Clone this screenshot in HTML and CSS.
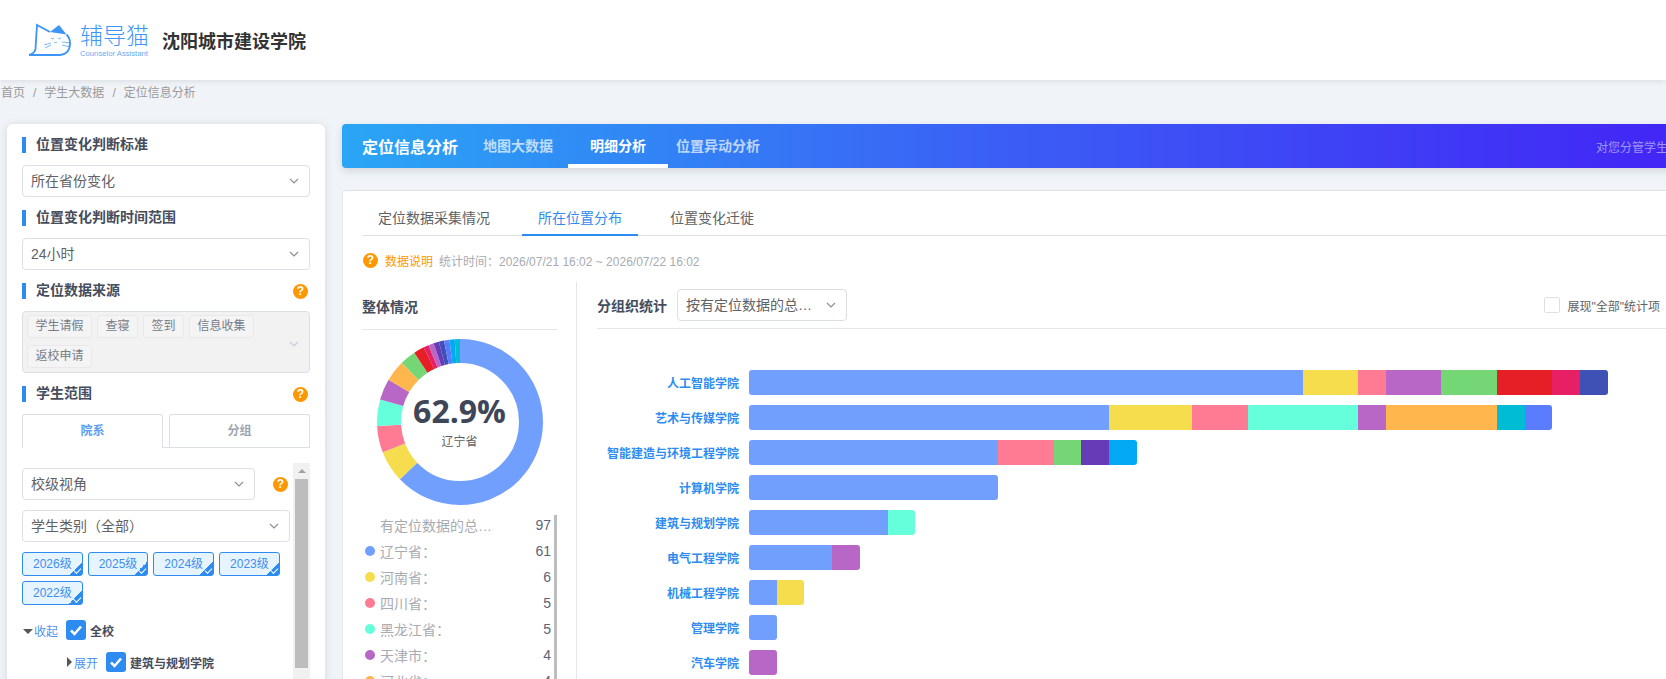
FILE: index.html
```html
<!DOCTYPE html>
<html lang="zh-CN">
<head>
  <meta charset="UTF-8">
  <meta name="viewport" content="width=device-width, initial-scale=1.0">
  <title>定位信息分析</title>
  <link rel="stylesheet" href="styles.css">
</head>
<body>
  <header class="topbar">
    <svg class="logo-cat" viewBox="0 0 42 34" width="42" height="34">
      <path class="cat-ear" d="M30 2 L21 9 L37.500 11.500 Z"/>
      <path class="cat-line" d="M21 9 L8 2 L6.500 26 Q6 29 3.500 30.500 L0 32 L31 32 Q41 31 41 20 Q41 15 37.500 11.500"/>
      <path class="cat-thin" d="M15 22 L22 20 M16 25 L22 22 M33 19 L42 20 M33 22 L41 24"/>
      <path class="cat-thin" d="M22 15 q1.500 1.500 3 0 M29 15 q1.500 1.500 3 0 M25 19 q1.500 1.500 3 0"/>
    </svg>
    <div class="logo-text">
      <div class="logo-name">辅导猫</div>
      <div class="logo-sub">Counselor Assistant</div>
    </div>
    <div class="school">沈阳城市建设学院</div>
  </header>

  <nav class="crumbs">首页<i>/</i>学生大数据<i>/</i>定位信息分析</nav>

  <div class="page">
    <aside class="side">
      <div class="side-title">位置变化判断标准</div>
      <div class="select">
        <span class="select-text">所在省份变化</span>
        <svg class="chev" viewBox="0 0 10 6" width="10" height="6"><path d="M1 1 L5 5 L9 1"/></svg>
      </div>

      <div class="side-title">位置变化判断时间范围</div>
      <div class="select">
        <span class="select-text">24小时</span>
        <svg class="chev" viewBox="0 0 10 6" width="10" height="6"><path d="M1 1 L5 5 L9 1"/></svg>
      </div>

      <div class="side-title">定位数据来源<span class="help">?</span></div>
      <div class="multi">
        <div class="multi-tags">
          <span class="mtag">学生请假</span>
          <span class="mtag">查寝</span>
          <span class="mtag">签到</span>
          <span class="mtag">信息收集</span>
          <span class="mtag">返校申请</span>
        </div>
        <svg class="chev faded" viewBox="0 0 10 6" width="10" height="6"><path d="M1 1 L5 5 L9 1"/></svg>
      </div>

      <div class="side-title">学生范围<span class="help">?</span></div>
      <div class="scope-tabs">
        <div class="scope-tab on">院系</div>
        <div class="scope-tab">分组</div>
      </div>

      <div class="scope">
        <div class="scope-body">
          <div class="view-row">
            <div class="select">
              <span class="select-text">校级视角</span>
              <svg class="chev" viewBox="0 0 10 6" width="10" height="6"><path d="M1 1 L5 5 L9 1"/></svg>
            </div>
            <span class="help">?</span>
          </div>
          <div class="select">
            <span class="select-text">学生类别（全部）</span>
            <svg class="chev" viewBox="0 0 10 6" width="10" height="6"><path d="M1 1 L5 5 L9 1"/></svg>
          </div>
          <div class="years">
            <span class="year">2026级</span>
            <span class="year">2025级</span>
            <span class="year">2024级</span>
            <span class="year">2023级</span>
            <span class="year">2022级</span>
          </div>
          <div class="tree-row">
            <span class="tri-down"></span><a class="tree-link">收起</a>
            <span class="check"><svg viewBox="0 0 20 20" width="20" height="20"><path d="M5 10.500 L8.500 14 L15 6.500"/></svg></span>
            <b class="tree-name">全校</b>
          </div>
          <div class="tree-row sub">
            <span class="tri-right"></span><a class="tree-link">展开</a>
            <span class="check"><svg viewBox="0 0 20 20" width="20" height="20"><path d="M5 10.500 L8.500 14 L15 6.500"/></svg></span>
            <b class="tree-name">建筑与规划学院</b>
          </div>
        </div>
        <div class="scroll-y">
          <span class="scroll-up"></span>
          <div class="scroll-thumb"></div>
        </div>
      </div>
    </aside>

    <main class="main">
      <div class="banner">
        <div class="banner-title">定位信息分析</div>
        <a class="banner-tab">地图大数据</a>
        <a class="banner-tab on">明细分析</a>
        <a class="banner-tab">位置异动分析</a>
        <div class="banner-note">对您分管学生</div>
      </div>

      <section class="card">
        <div class="tabs">
          <a class="tab">定位数据采集情况</a>
          <a class="tab on">所在位置分布</a>
          <a class="tab">位置变化迁徙</a>
        </div>

        <div class="info">
          <span class="help">?</span>
          <span class="info-link">数据说明</span>
          <span class="info-time">统计时间：2026/07/21 16:02 ~ 2026/07/22 16:02</span>
        </div>

        <div class="stats">
          <div class="overall">
            <div class="overall-title">整体情况</div>
            <div class="donut">
              <svg viewBox="0 0 166 166" width="166" height="166">
                <g class="donut-ring" transform="rotate(-90 83 83)">
                  <circle cx="83" cy="83" r="71" pathLength="97" stroke="#709ffe" stroke-dasharray="61 97" stroke-dashoffset="0"/>
                  <circle cx="83" cy="83" r="71" pathLength="97" stroke="#f5dd4d" stroke-dasharray="6 97" stroke-dashoffset="-61"/>
                  <circle cx="83" cy="83" r="71" pathLength="97" stroke="#ff7b93" stroke-dasharray="5 97" stroke-dashoffset="-67"/>
                  <circle cx="83" cy="83" r="71" pathLength="97" stroke="#66ffdb" stroke-dasharray="5 97" stroke-dashoffset="-72"/>
                  <circle cx="83" cy="83" r="71" pathLength="97" stroke="#b867c6" stroke-dasharray="4 97" stroke-dashoffset="-77"/>
                  <circle cx="83" cy="83" r="71" pathLength="97" stroke="#ffb74d" stroke-dasharray="4 97" stroke-dashoffset="-81"/>
                  <circle cx="83" cy="83" r="71" pathLength="97" stroke="#75d676" stroke-dasharray="3 97" stroke-dashoffset="-85"/>
                  <circle cx="83" cy="83" r="71" pathLength="97" stroke="#e61e26" stroke-dasharray="2 97" stroke-dashoffset="-88"/>
                  <circle cx="83" cy="83" r="71" pathLength="97" stroke="#e72065" stroke-dasharray="1 97" stroke-dashoffset="-90"/>
                  <circle cx="83" cy="83" r="71" pathLength="97" stroke="#b867c6" stroke-dasharray="1 97" stroke-dashoffset="-91"/>
                  <circle cx="83" cy="83" r="71" pathLength="97" stroke="#673ab7" stroke-dasharray="1 97" stroke-dashoffset="-92"/>
                  <circle cx="83" cy="83" r="71" pathLength="97" stroke="#3f51b5" stroke-dasharray="1 97" stroke-dashoffset="-93"/>
                  <circle cx="83" cy="83" r="71" pathLength="97" stroke="#5c7cff" stroke-dasharray="1 97" stroke-dashoffset="-94"/>
                  <circle cx="83" cy="83" r="71" pathLength="97" stroke="#03a9f4" stroke-dasharray="1 97" stroke-dashoffset="-95"/>
                  <circle cx="83" cy="83" r="71" pathLength="97" stroke="#00bcd4" stroke-dasharray="1 97" stroke-dashoffset="-96"/>
                </g>
              </svg>
              <div class="donut-label">
                <div class="donut-pct">62.9%</div>
                <div class="donut-name">辽宁省</div>
              </div>
            </div>
            <div class="legend">
              <div class="legend-list">
                <div class="legend-row"><span class="dot none"></span><span class="legend-name">有定位数据的总…</span><span class="legend-num">97</span></div>
                <div class="legend-row"><span class="dot c-blue"></span><span class="legend-name">辽宁省：</span><span class="legend-num">61</span></div>
                <div class="legend-row"><span class="dot c-yellow"></span><span class="legend-name">河南省：</span><span class="legend-num">6</span></div>
                <div class="legend-row"><span class="dot c-pink"></span><span class="legend-name">四川省：</span><span class="legend-num">5</span></div>
                <div class="legend-row"><span class="dot c-teal"></span><span class="legend-name">黑龙江省：</span><span class="legend-num">5</span></div>
                <div class="legend-row"><span class="dot c-purple"></span><span class="legend-name">天津市：</span><span class="legend-num">4</span></div>
                <div class="legend-row"><span class="dot c-orange"></span><span class="legend-name">河北省：</span><span class="legend-num">4</span></div>
              </div>
              <div class="legend-bar"></div>
            </div>
          </div>

          <div class="groups">
            <div class="groups-head">
              <span class="groups-title">分组织统计</span>
              <div class="select groups-select">
                <span class="select-text">按有定位数据的总…</span>
                <svg class="chev" viewBox="0 0 10 6" width="10" height="6"><path d="M1 1 L5 5 L9 1"/></svg>
              </div>
              <label class="show-all"><span class="box"></span>展现"全部"统计项</label>
            </div>

            <div class="chart">
              <div class="chart-row">
                <div class="chart-name">人工智能学院</div>
                <div class="bar">
                  <span class="seg c-blue" style="width:554px"></span>
                  <span class="seg c-yellow" style="width:55.4px"></span>
                  <span class="seg c-pink" style="width:27.7px"></span>
                  <span class="seg c-purple" style="width:55.4px"></span>
                  <span class="seg c-green" style="width:55.4px"></span>
                  <span class="seg c-red" style="width:55.4px"></span>
                  <span class="seg c-rose" style="width:27.7px"></span>
                  <span class="seg c-indigo" style="width:27.7px"></span>
                </div>
              </div>
              <div class="chart-row">
                <div class="chart-name">艺术与传媒学院</div>
                <div class="bar">
                  <span class="seg c-blue" style="width:360.1px"></span>
                  <span class="seg c-yellow" style="width:83.1px"></span>
                  <span class="seg c-pink" style="width:55.4px"></span>
                  <span class="seg c-teal" style="width:110.8px"></span>
                  <span class="seg c-purple" style="width:27.7px"></span>
                  <span class="seg c-orange" style="width:110.8px"></span>
                  <span class="seg c-cyan" style="width:27.7px"></span>
                  <span class="seg c-periwinkle" style="width:27.7px"></span>
                </div>
              </div>
              <div class="chart-row">
                <div class="chart-name">智能建造与环境工程学院</div>
                <div class="bar">
                  <span class="seg c-blue" style="width:249.3px"></span>
                  <span class="seg c-pink" style="width:55.4px"></span>
                  <span class="seg c-green" style="width:27.7px"></span>
                  <span class="seg c-violet" style="width:27.7px"></span>
                  <span class="seg c-sky" style="width:27.7px"></span>
                </div>
              </div>
              <div class="chart-row">
                <div class="chart-name">计算机学院</div>
                <div class="bar"><span class="seg c-blue" style="width:249.3px"></span></div>
              </div>
              <div class="chart-row">
                <div class="chart-name">建筑与规划学院</div>
                <div class="bar">
                  <span class="seg c-blue" style="width:138.5px"></span>
                  <span class="seg c-teal" style="width:27.7px"></span>
                </div>
              </div>
              <div class="chart-row">
                <div class="chart-name">电气工程学院</div>
                <div class="bar">
                  <span class="seg c-blue" style="width:83.1px"></span>
                  <span class="seg c-purple" style="width:27.7px"></span>
                </div>
              </div>
              <div class="chart-row">
                <div class="chart-name">机械工程学院</div>
                <div class="bar">
                  <span class="seg c-blue" style="width:27.7px"></span>
                  <span class="seg c-yellow" style="width:27.7px"></span>
                </div>
              </div>
              <div class="chart-row">
                <div class="chart-name">管理学院</div>
                <div class="bar"><span class="seg c-blue" style="width:27.7px"></span></div>
              </div>
              <div class="chart-row">
                <div class="chart-name">汽车学院</div>
                <div class="bar"><span class="seg c-purple" style="width:27.7px"></span></div>
              </div>
            </div>
          </div>
        </div>
      </section>
    </main>
  </div>
</body>
</html>
```

FILE: styles.css
```css
* {
  box-sizing: border-box;
}

html,
body {
  height: 679px;
  margin: 0;
  overflow: hidden;
}

body {
  font-family: "Liberation Sans", "Noto Sans CJK SC", sans-serif;
  font-size: 14px;
  color: #606266;
  background-color: #f0f3f8;
}

/* top bar */
.topbar {
  display: flex;
  align-items: center;
  height: 80px;
  padding-left: 29px;
  background-color: #fff;
  box-shadow: 0 1px 6px rgba(0, 0, 0, 0.1);
  position: relative;
}

.logo-cat {
  flex: none;
  margin-right: 9px;
}

.cat-ear {
  fill: #3d96f5;
}

.cat-line {
  fill: none;
  stroke: #3d96f5;
  stroke-width: 1.800;
}

.cat-thin {
  fill: none;
  stroke: #3d96f5;
  stroke-width: 0.700;
}

.logo-text {
  width: 68px;
  color: #3d96f5;
}

.logo-name {
  font-size: 23px;
  line-height: 26px;
  font-weight: 300;
  white-space: nowrap;
}

.logo-sub {
  font-size: 7.700px;
  line-height: 8px;
  white-space: nowrap;
  margin-top: 1px;
  opacity: 0.8;
}

.school {
  margin-left: 14px;
  font-size: 18px;
  font-weight: bold;
  color: #333;
}

.crumbs {
  height: 26px;
  line-height: 26px;
  padding-left: 1px;
  font-size: 12px;
  color: #9a9a9a;
}

.crumbs i {
  font-style: normal;
  margin: 0 8px;
}

.page {
  display: flex;
  align-items: flex-start;
  margin-top: 18px;
  padding-left: 7px;
}

/* left filter panel */
.side {
  flex: none;
  width: 318px;
  height: 600px;
  padding: 13px 15px 0;
  background-color: #fff;
  border-radius: 6px;
  box-shadow: 0 1px 8px rgba(0, 0, 0, 0.12);
}

.side-title {
  display: flex;
  align-items: center;
  justify-content: space-between;
  height: 16px;
  line-height: 16px;
  margin-top: 13px;
  padding: 0 2px 2px 10px;
  border-left: 4px solid #2e8cf0;
  font-weight: bold;
  color: #454c5c;
}

.side-title:first-child {
  margin-top: 0;
}

.side-title .help {
  margin-bottom: -2px;
}

.help {
  flex: none;
  width: 15px;
  height: 15px;
  line-height: 15px;
  border-radius: 50%;
  background-color: #ff9800;
  color: #fff;
  font-size: 12px;
  font-weight: bold;
  text-align: center;
}

.select {
  display: flex;
  align-items: center;
  justify-content: space-between;
  height: 32px;
  margin-top: 12px;
  padding: 0 10px 0 8px;
  background-color: #fff;
  border: 1px solid #dcdfe6;
  border-radius: 4px;
}

.select-text {
  padding-bottom: 2px;
  white-space: nowrap;
}

.chev {
  flex: none;
  fill: none;
  stroke: #8a8f99;
  stroke-width: 1.200;
}

.chev.faded {
  stroke: #c8ccd3;
}

.multi {
  display: flex;
  align-items: center;
  justify-content: space-between;
  height: 62px;
  margin-top: 12px;
  padding: 3px 10px 0 4px;
  background-color: #f2f2f2;
  border: 1px solid #dcdfe6;
  border-radius: 4px;
}

.multi-tags {
  display: flex;
  flex-wrap: wrap;
  align-content: flex-start;
  gap: 7px 5px;
  width: 240px;
  height: 100%;
}

.mtag {
  height: 23px;
  line-height: 21px;
  padding: 0 7.500px;
  font-size: 12px;
  color: #777c85;
  background-color: #f4f4f5;
  border: 1px solid #e9e9eb;
  border-radius: 3px;
}

.scope-tabs {
  display: flex;
  gap: 6px;
  height: 34px;
  margin-top: 12px;
  border-bottom: 1px solid #dcdfe6;
}

.scope-tab {
  flex: 1;
  height: 33px;
  line-height: 32px;
  font-size: 12px;
  font-weight: bold;
  text-align: center;
  color: #a0a4ad;
  border: 1px solid #dcdfe6;
  border-bottom: 0;
  border-radius: 3px 3px 0 0;
  background-color: #fff;
}

.scope-tab.on {
  height: 34px;
  color: #5a9cf0;
}

.scope {
  display: flex;
  height: 216px;
  margin-top: 15px;
}

.scope-body {
  flex: none;
  width: 271px;
  padding-top: 5px;
}

.view-row {
  display: flex;
  align-items: center;
  justify-content: space-between;
  width: 266px;
}

.view-row .select {
  width: 233px;
  margin-top: 0;
}

.scope-body > .select {
  width: 268px;
  margin-top: 10px;
}

.years {
  display: flex;
  flex-wrap: wrap;
  gap: 5px;
  margin-top: 10px;
}

.year {
  width: 60.700px;
  height: 24px;
  line-height: 22px;
  font-size: 12px;
  text-align: center;
  color: #3e8ef0;
  background:
    linear-gradient(135deg, transparent 0, transparent 50%, #2e8cf0 50%) right bottom / 13px 13px no-repeat,
    #e6f4ff;
  border: 1px solid #2e8cf0;
  border-radius: 3px;
  position: relative;
}

.year::after {
  content: "";
  position: absolute;
  right: 1px;
  bottom: 3px;
  width: 6px;
  height: 3px;
  border-left: 1px solid #fff;
  border-bottom: 1px solid #fff;
  transform: rotate(-45deg);
}

.tree-row {
  display: flex;
  align-items: center;
  height: 20px;
  margin-top: 15px;
  font-size: 12px;
}

.tree-row.sub {
  margin-top: 12px;
  padding-left: 45px;
}

.tri-down {
  width: 0;
  height: 0;
  margin: 2px 1px 0 1px;
  border: 5px solid transparent;
  border-top-color: #555;
  border-bottom: 0;
}

.tri-right {
  width: 0;
  height: 0;
  margin-right: 2px;
  border: 5px solid transparent;
  border-left-color: #555;
  border-right: 0;
}

.tree-link {
  color: #4d94ee;
}

.check {
  flex: none;
  width: 20px;
  height: 20px;
  margin: 0 4px 0 8px;
  background-color: #2e8cf0;
  border-radius: 3px;
}

.check svg {
  display: block;
  fill: none;
  stroke: #fff;
  stroke-width: 2.500;
}

.tree-name {
  color: #454c5c;
}

.scroll-y {
  flex: none;
  width: 17px;
  padding: 0 2px;
  background-color: #f1f1f1;
}

.scroll-up {
  display: block;
  width: 0;
  height: 0;
  margin: 6px auto;
  border: 4px solid transparent;
  border-bottom-color: #a3a3a3;
  border-top: 0;
}

.scroll-thumb {
  height: 189px;
  background-color: #bdbdbd;
}

/* main column */
.main {
  flex: none;
  width: 1340px;
  margin-left: 17px;
}

.banner {
  display: flex;
  align-items: center;
  height: 44px;
  padding-left: 20px;
  background: linear-gradient(90deg, #2aa6f5 0%, #3b5df5 50%, #4225f5 100%);
  border-radius: 4px;
  box-shadow: 0 3px 8px rgba(0, 0, 0, 0.12);
  white-space: nowrap;
  color: #fff;
}

.banner-title {
  flex: none;
  width: 106px;
  font-size: 16px;
  font-weight: bold;
}

.banner-tab {
  flex: none;
  min-width: 100px;
  height: 44px;
  padding: 0 8px;
  line-height: 44px;
  text-align: center;
  font-weight: bold;
  color: rgba(255, 255, 255, 0.7);
}

.banner-tab.on {
  color: #fff;
  border-bottom: 4px solid #fff;
}

.banner-note {
  flex: none;
  margin-left: 828px;
  font-size: 12px;
  color: rgba(255, 255, 255, 0.5);
}

.card {
  height: 500px;
  margin-top: 22px;
  padding: 10px 0 0 19px;
  background-color: #fff;
  border-top: 1px solid #dfe1e6;
  border-left: 1px solid #e6e8ec;
  border-radius: 4px;
  overflow: hidden;
}

.tabs {
  display: flex;
  gap: 16px;
  height: 35px;
  border-bottom: 1px solid #dcdfe6;
}

.tab {
  height: 35px;
  line-height: 34px;
  padding: 0 16px;
  color: #606266;
}

.tab.on {
  color: #2e8cf0;
  border-bottom: 2px solid #2e8cf0;
}

.info {
  display: flex;
  align-items: center;
  height: 46px;
  padding: 3px 0 0 1px;
  font-size: 12px;
}

.info-link {
  margin-left: 7px;
  color: #ff9800;
}

.info-time {
  margin-left: 6px;
  color: #a8abb2;
}

.stats {
  display: flex;
}

.overall {
  flex: none;
  width: 215px;
  height: 400px;
  padding-right: 19px;
  border-right: 1px solid #e4e6eb;
}

.overall-title {
  padding: 17px 0 14px;
  line-height: 16px;
  font-weight: bold;
  color: #454c5c;
  border-bottom: 1px solid #e4e6eb;
}

.donut {
  display: flex;
  justify-content: center;
  margin-top: 9px;
  position: relative;
}

.donut-ring circle {
  fill: none;
  stroke-width: 24;
}

.donut-label {
  position: absolute;
  left: 0;
  right: 0;
  top: 52px;
  text-align: center;
}

.donut-pct {
  font-family: "Open Sans", sans-serif;
  font-size: 32px;
  line-height: 40px;
  font-weight: bold;
  color: #3e4657;
}

.donut-name {
  margin-top: 3px;
  font-size: 12px;
  line-height: 16px;
  color: #606266;
}

.legend {
  display: flex;
  margin-top: 7px;
}

.legend-list {
  flex: 1;
  padding: 0 3px;
}

.legend-row {
  display: flex;
  align-items: center;
  height: 26px;
}

.dot {
  flex: none;
  width: 10px;
  height: 10px;
  margin-right: 5px;
  border-radius: 50%;
}

.dot.none {
  background: none;
}

.legend-name {
  flex: 1;
  color: #a8abb2;
}

.legend-num {
  color: #5c6475;
}

.legend-bar {
  flex: none;
  width: 3px;
  height: 170px;
  margin-top: 3px;
  background-color: #bdbdbd;
}

.groups {
  flex: 1;
  min-width: 0;
  padding-left: 20px;
}

.groups-head {
  display: flex;
  align-items: center;
  height: 47px;
  padding: 7px 22px 7px 0;
  border-bottom: 1px solid #e4e6eb;
}

.groups-title {
  font-weight: bold;
  color: #454c5c;
}

.groups-select {
  flex: none;
  width: 170px;
  margin: 0 0 0 10px;
}

.show-all {
  display: flex;
  align-items: center;
  margin-left: auto;
  font-size: 12px;
  color: #606266;
}

.box {
  width: 16px;
  height: 16px;
  margin-right: 7px;
  border: 1px solid #dcdfe6;
  border-radius: 2px;
}

.chart {
  padding-top: 41px;
}

.chart-row {
  display: flex;
  align-items: center;
  height: 25px;
  margin-bottom: 10px;
}

.chart-name {
  flex: none;
  width: 152px;
  padding-right: 10px;
  text-align: right;
  font-size: 12px;
  font-weight: bold;
  color: #2e8cf0;
  white-space: nowrap;
}

.bar {
  display: flex;
  height: 25px;
  border-radius: 3px;
  overflow: hidden;
}

.seg {
  display: block;
  height: 100%;
}

.c-blue { background-color: #709ffe; }
.c-yellow { background-color: #f5dd4d; }
.c-pink { background-color: #ff7b93; }
.c-teal { background-color: #66ffdb; }
.c-purple { background-color: #b867c6; }
.c-orange { background-color: #ffb74d; }
.c-green { background-color: #75d676; }
.c-red { background-color: #e61e26; }
.c-rose { background-color: #e72065; }
.c-indigo { background-color: #3f51b5; }
.c-cyan { background-color: #00bcd4; }
.c-periwinkle { background-color: #5c7cff; }
.c-violet { background-color: #673ab7; }
.c-sky { background-color: #03a9f4; }
```
